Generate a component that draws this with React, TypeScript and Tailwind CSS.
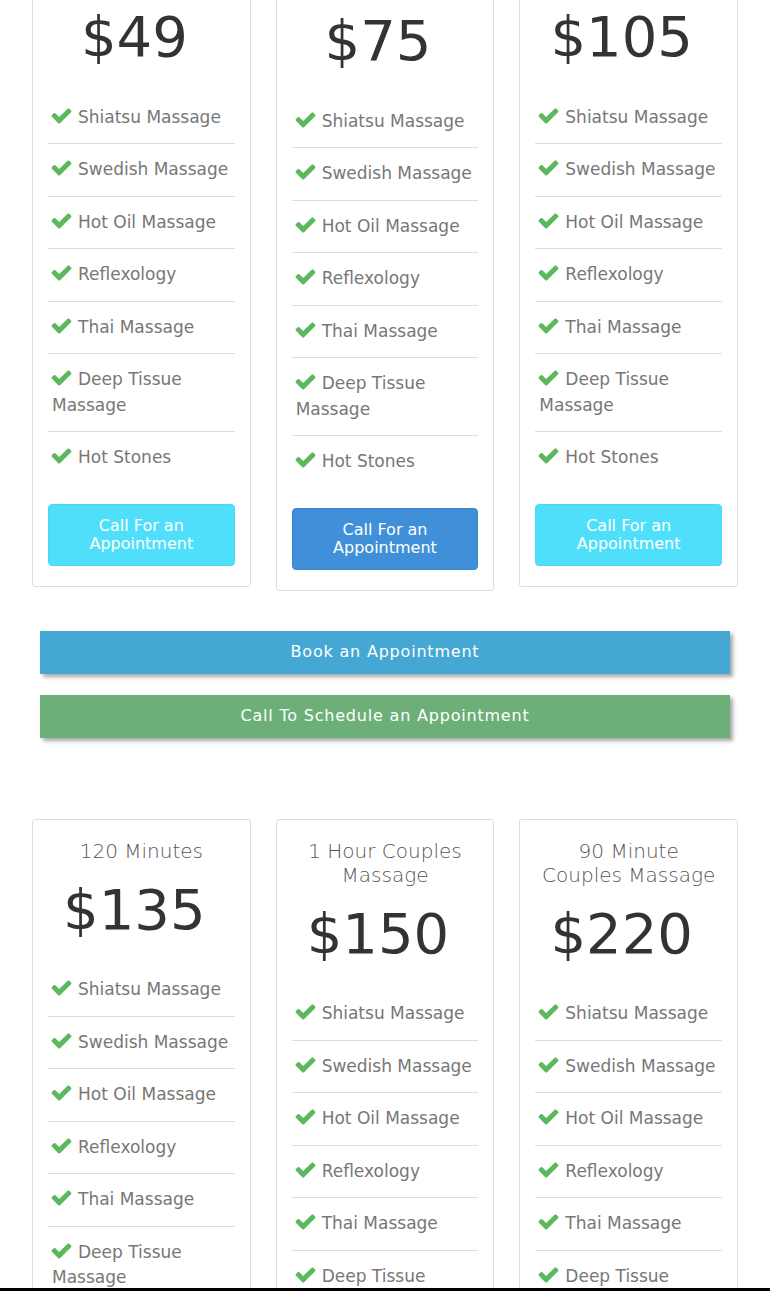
import React from "react";

type Plan = {
  title: React.ReactNode;
  price: string;
  featured?: boolean;
};

const SERVICES = [
  "Shiatsu Massage",
  "Swedish Massage",
  "Hot Oil Massage",
  "Reflexology",
  "Thai Massage",
  "Deep Tissue Massage",
  "Hot Stones",
];

const TOP_PLANS: Plan[] = [
  { title: "30 Minutes", price: "$49" },
  { title: "60 Minutes", price: "$75", featured: true },
  { title: "90 Minutes", price: "$105" },
];

const BOTTOM_PLANS: Plan[] = [
  { title: "120 Minutes", price: "$135" },
  { title: "1 Hour Couples Massage", price: "$150" },
  {
    title: (
      <>
        90 Minute
        <br />
        Couples Massage
      </>
    ),
    price: "$220",
  },
];

function Check() {
  return (
    <svg
      viewBox="0 0 1792 1792"
      className="inline-block w-[23px] h-[23px] -ml-[2px] mr-[5px] -mt-[5px] align-middle fill-[#5cb85c]"
    >
      <path d="M1671 566q0 40-28 68l-724 724-136 136q-28 28-68 28t-68-28l-136-136-362-362q-28-28-28-68t28-68l136-136q28-28 68-28t68 28l294 295 656-657q28-28 68-28t68 28l136 136q28 28 28 68z" />
    </svg>
  );
}

function PlanCard({ plan }: { plan: Plan }) {
  return (
    <div
      className={`bg-white border border-[#ddd] rounded-[3px] px-[15px] pb-[20px] ${
        plan.featured ? "pt-[23px]" : "pt-[19px]"
      }`}
    >
      <h3 className="m-0 text-center text-[20px] leading-[24px] text-[#555] font-light">{plan.title}</h3>
      <div className="mt-[16px] pr-[14px] text-center text-[56px] leading-[61.6px] text-[#333]">{plan.price}</div>
      <ul className="list-none m-0 mt-[24px] p-0">
        {SERVICES.map((s) => (
          <li
            key={s}
            className="pl-[4px] pr-[4px] py-[13px] text-[17px] leading-[25.5px] text-[#777] border-b border-[#ddd] last:border-b-0"
          >
            <Check />
            {s}
          </li>
        ))}
      </ul>
      <button
        className={`mt-[20px] w-full rounded-[4px] border py-[12px] text-[16px] leading-[18px] text-white ${
          plan.featured ? "bg-[#3f90d8] border-[#3a86cc]" : "bg-[#4fdffb] border-[#48d8f4]"
        }`}
      >
        Call For an
        <br />
        Appointment
      </button>
    </div>
  );
}

export default function App() {
  return (
    <div className="bg-white min-h-[1291px] font-['DejaVu_Sans',sans-serif] overflow-hidden">
      <div className="-mt-[54px] grid grid-cols-3 gap-[25px] px-[32px] items-start">
        {TOP_PLANS.map((p) => (
          <PlanCard key={p.price} plan={p} />
        ))}
      </div>

      <div className="mx-[40px] mt-[40px] flex flex-col gap-[21px]">
        <button className="h-[43px] bg-[#45a8d4] text-white text-[16px] tracking-[0.05em] shadow-[3px_3px_4px_rgba(0,0,0,0.35)]">
          Book an Appointment
        </button>
        <button className="h-[43px] bg-[#6daf79] text-white text-[16px] tracking-[0.05em] shadow-[3px_3px_4px_rgba(0,0,0,0.35)]">
          Call To Schedule an Appointment
        </button>
      </div>

      <div className="mt-[81px] grid grid-cols-3 gap-[25px] px-[32px] items-start pb-[40px]">
        {BOTTOM_PLANS.map((p) => (
          <PlanCard key={p.price} plan={p} />
        ))}
      </div>

      <div className="fixed left-0 right-0 bottom-0 h-[3px] bg-black" />
    </div>
  );
}
